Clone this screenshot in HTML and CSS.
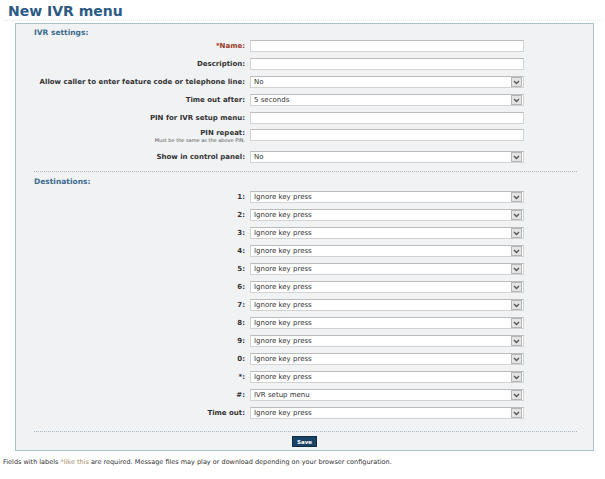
FILE: index.html
```html
<!DOCTYPE html>
<html lang="en">
<head>
    <meta charset="UTF-8">
    <title>New IVR menu</title>
    <link rel="stylesheet" href="styles.css">
</head>
<body>
    <h1 class="title">New IVR menu</h1>
    <div class="panel">
        <h2 class="section">IVR settings:</h2>
        <div class="row"><label class="req">*Name:</label><input type="text"></div>
        <div class="row"><label>Description:</label><input type="text"></div>
        <div class="row"><label>Allow caller to enter feature code or telephone line:</label><div class="select"><span>No</span><span class="arrow"><svg width="7" height="5" viewBox="0 0 7 5"><path d="M1 1l2.5 2.5L6 1" fill="none" stroke="#555" stroke-width="1.3"/></svg></span></div></div>
        <div class="row"><label>Time out after:</label><div class="select"><span>5 seconds</span><span class="arrow"><svg width="7" height="5" viewBox="0 0 7 5"><path d="M1 1l2.5 2.5L6 1" fill="none" stroke="#555" stroke-width="1.3"/></svg></span></div></div>
        <div class="row"><label>PIN for IVR setup menu:</label><input type="text"></div>
        <div class="row tall"><label>PIN repeat:<small>Must be the same as the above PIN.</small></label><input type="text"></div>
        <div class="row"><label>Show in control panel:</label><div class="select"><span>No</span><span class="arrow"><svg width="7" height="5" viewBox="0 0 7 5"><path d="M1 1l2.5 2.5L6 1" fill="none" stroke="#555" stroke-width="1.3"/></svg></span></div></div>

        <hr class="sep">
        <h2 class="section">Destinations:</h2>
        <div class="row"><label>1:</label><div class="select"><span>Ignore key press</span><span class="arrow"><svg width="7" height="5" viewBox="0 0 7 5"><path d="M1 1l2.5 2.5L6 1" fill="none" stroke="#555" stroke-width="1.3"/></svg></span></div></div>
        <div class="row"><label>2:</label><div class="select"><span>Ignore key press</span><span class="arrow"><svg width="7" height="5" viewBox="0 0 7 5"><path d="M1 1l2.5 2.5L6 1" fill="none" stroke="#555" stroke-width="1.3"/></svg></span></div></div>
        <div class="row"><label>3:</label><div class="select"><span>Ignore key press</span><span class="arrow"><svg width="7" height="5" viewBox="0 0 7 5"><path d="M1 1l2.5 2.5L6 1" fill="none" stroke="#555" stroke-width="1.3"/></svg></span></div></div>
        <div class="row"><label>4:</label><div class="select"><span>Ignore key press</span><span class="arrow"><svg width="7" height="5" viewBox="0 0 7 5"><path d="M1 1l2.5 2.5L6 1" fill="none" stroke="#555" stroke-width="1.3"/></svg></span></div></div>
        <div class="row"><label>5:</label><div class="select"><span>Ignore key press</span><span class="arrow"><svg width="7" height="5" viewBox="0 0 7 5"><path d="M1 1l2.5 2.5L6 1" fill="none" stroke="#555" stroke-width="1.3"/></svg></span></div></div>
        <div class="row"><label>6:</label><div class="select"><span>Ignore key press</span><span class="arrow"><svg width="7" height="5" viewBox="0 0 7 5"><path d="M1 1l2.5 2.5L6 1" fill="none" stroke="#555" stroke-width="1.3"/></svg></span></div></div>
        <div class="row"><label>7:</label><div class="select"><span>Ignore key press</span><span class="arrow"><svg width="7" height="5" viewBox="0 0 7 5"><path d="M1 1l2.5 2.5L6 1" fill="none" stroke="#555" stroke-width="1.3"/></svg></span></div></div>
        <div class="row"><label>8:</label><div class="select"><span>Ignore key press</span><span class="arrow"><svg width="7" height="5" viewBox="0 0 7 5"><path d="M1 1l2.5 2.5L6 1" fill="none" stroke="#555" stroke-width="1.3"/></svg></span></div></div>
        <div class="row"><label>9:</label><div class="select"><span>Ignore key press</span><span class="arrow"><svg width="7" height="5" viewBox="0 0 7 5"><path d="M1 1l2.5 2.5L6 1" fill="none" stroke="#555" stroke-width="1.3"/></svg></span></div></div>
        <div class="row"><label>0:</label><div class="select"><span>Ignore key press</span><span class="arrow"><svg width="7" height="5" viewBox="0 0 7 5"><path d="M1 1l2.5 2.5L6 1" fill="none" stroke="#555" stroke-width="1.3"/></svg></span></div></div>
        <div class="row"><label>*:</label><div class="select"><span>Ignore key press</span><span class="arrow"><svg width="7" height="5" viewBox="0 0 7 5"><path d="M1 1l2.5 2.5L6 1" fill="none" stroke="#555" stroke-width="1.3"/></svg></span></div></div>
        <div class="row"><label>#:</label><div class="select"><span>IVR setup menu</span><span class="arrow"><svg width="7" height="5" viewBox="0 0 7 5"><path d="M1 1l2.5 2.5L6 1" fill="none" stroke="#555" stroke-width="1.3"/></svg></span></div></div>
        <div class="row"><label>Time out:</label><div class="select"><span>Ignore key press</span><span class="arrow"><svg width="7" height="5" viewBox="0 0 7 5"><path d="M1 1l2.5 2.5L6 1" fill="none" stroke="#555" stroke-width="1.3"/></svg></span></div></div>

        <hr class="sep end">
        <div class="actions"><button class="save">Save</button></div>
    </div>
    <p class="note">Fields with labels <span class="req-sample">*like this</span> are required. Message files may play or download depending on your browser configuration.</p>
</body>
</html>
```

FILE: styles.css
```css
body {
    margin: 0;
    padding: 0 3px;
    font-family: "DejaVu Sans", Verdana, sans-serif;
    background: #fff;
    color: #333;
}
.title {
    margin: 0;
    padding: 3px 5px 1px;
    font-size: 14px;
    line-height: 16px;
    color: #2b5b84;
    border-bottom: 1px dotted #dfe4e8;
}
.panel {
    margin: 2px 0 0 12px;
    width: 579px;
    box-sizing: border-box;
    border: 1px solid #a9c3cc;
    background: #f1f2f4;
    padding: 4px 0 3px;
}
.section {
    margin: 0 0 0 18px;
    font-size: 7.5px;
    line-height: 9px;
    color: #3b6a8d;
}
.sep + .section {
    margin-top: 5px;
    margin-bottom: 2px;
}
.row {
    display: grid;
    grid-template-columns: 229px 274px;
    column-gap: 5px;
    align-items: center;
    height: 18px;
}
.row label {
    text-align: right;
    font-weight: bold;
    font-size: 7px;
    line-height: 8px;
}
.row label.req {
    color: #9c3b2a;
}
.row.tall {
    height: 21px;
    align-items: start;
    padding-top: 2px;
    box-sizing: border-box;
}
.row label small {
    display: block;
    font-weight: normal;
    font-size: 5px;
    line-height: 7px;
    color: #555;
}
.row input, .select {
    height: 12px;
    box-sizing: border-box;
    margin: 0;
    border: 1px solid #d2d2d2;
    border-top-color: #bcbcbc;
    background: #fff;
    padding: 0 3px;
    font-family: "DejaVu Sans", sans-serif;
    font-size: 7px;
}
.select {
    display: flex;
    align-items: center;
    justify-content: space-between;
    padding-right: 1px;
    color: #333;
}
.select .arrow {
    width: 11px;
    height: 10px;
    box-sizing: border-box;
    border: 1px solid #b5b5b5;
    background: #e4e4e4;
    display: flex;
    align-items: center;
    justify-content: center;
}
.sep {
    height: 0;
    border: 0;
    border-top: 1px dotted #a9b9c4;
    margin: 5px 16px 0 18px;
}
.sep.end {
    margin-top: 9px;
}
.actions {
    margin-top: 4px;
    text-align: center;
    line-height: 0;
}
.save {
    width: 25px;
    height: 11px;
    padding: 0;
    border: 1px solid #0f2c47;
    background: #1b4366;
    color: #fff;
    font-family: "DejaVu Sans", sans-serif;
    font-weight: bold;
    font-size: 5.5px;
    cursor: pointer;
}
.note {
    margin: 6px 0 0;
    font-size: 6.5px;
    line-height: 10px;
    color: #333;
}
.req-sample {
    color: #a58a6a;
}
```
